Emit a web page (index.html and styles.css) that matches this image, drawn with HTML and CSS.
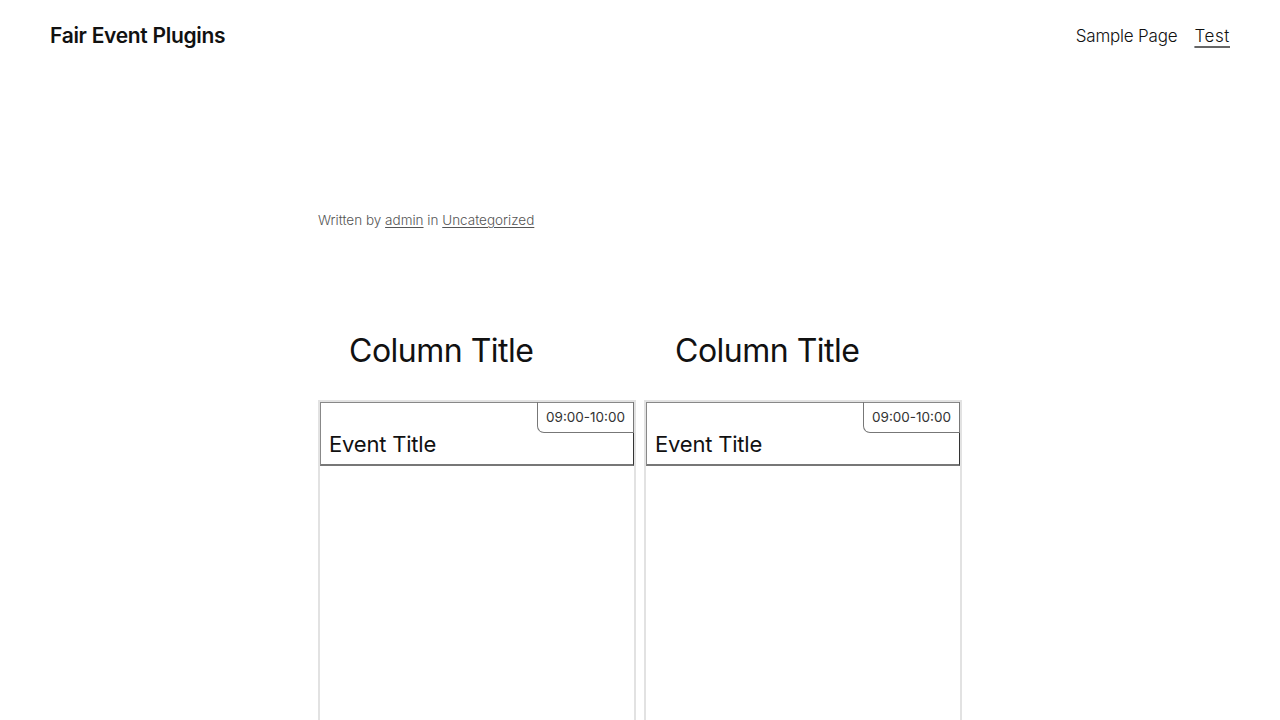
FILE: index.html
```html
<!DOCTYPE html>
<html lang="en">
<head>
<meta charset="utf-8">
<title>Fair Event Plugins</title>
<link rel="stylesheet" href="styles.css">
</head>
<body>
<header class="site-header">
  <div class="site-title">Fair Event Plugins</div>
  <nav class="site-nav">
    <a class="nav-link plain" href="#">Sample Page</a>
    <a class="nav-link wide" href="#">Test</a>
  </nav>
</header>
<main class="content">
  <p class="post-meta">Written by <a href="#">admin</a> in <a href="#">Uncategorized</a></p>
  <div class="schedule">
    <div class="column">
      <h2 class="column-title">Column Title</h2>
      <div class="column-box">
        <div class="event">
          <span class="event-time">09:00-10:00</span>
          <div class="event-title">Event Title</div>
        </div>
      </div>
    </div>
    <div class="column">
      <h2 class="column-title">Column Title</h2>
      <div class="column-box">
        <div class="event">
          <span class="event-time">09:00-10:00</span>
          <div class="event-title">Event Title</div>
        </div>
      </div>
    </div>
  </div>
</main>
</body>
</html>
```
FILE: styles.css
```css
* { box-sizing: border-box; }
html, body { margin: 0; padding: 0; background: #fff; }
body {
  font-family: Inter, "Noto Sans", sans-serif;
  color: #111;
  overflow: hidden;
  height: 720px;
}
.site-header {
  display: flex;
  justify-content: space-between;
  align-items: center;
  height: 70px;
  padding: 0 50px;
}
.site-title {
  font-size: 21px;
  font-weight: 600;
  letter-spacing: -0.3px;
}
.site-nav {
  display: flex;
  gap: 17px;
  padding-top: 2px;
}
.nav-link {
  font-size: 17px;
  font-weight: 300;
  color: #111;
  letter-spacing: -0.2px;
  text-decoration: underline;
  text-decoration-thickness: 1.5px;
  text-underline-offset: 4px;
  text-decoration-color: #666;
}
.nav-link.plain { text-decoration: none; }
.nav-link.wide { letter-spacing: 0.6px; }
.content {
  width: 644px;
  margin: 0 auto;
}
.post-meta {
  margin: 141px 0 0;
  font-size: 13.5px;
  font-weight: 300;
  color: #555;
  line-height: 18px;
}
.post-meta a { color: #555; text-underline-offset: 2px; }
.schedule {
  display: flex;
  gap: 8px;
  margin-top: 99px;
}
.column { width: 318px; }
.column-title {
  margin: 0;
  padding-left: 31px;
  font-size: 32px;
  font-weight: 400;
  line-height: 46px;
  height: 72px;
  letter-spacing: -0.5px;
}
.column-box {
  height: 340px;
  border: 2px solid #e2e2e2;
  border-bottom: none;
}
.event {
  position: relative;
  height: 64px;
  border: 1px solid #888;
  border-right-color: #333;
  border-bottom: 2px solid #777;
  padding: 27px 8px 0;
}
.event-time {
  position: absolute;
  top: -1px;
  right: -1px;
  height: 31px;
  padding: 0 8px;
  border: 1px solid #777;
  border-top: none;
  border-bottom-left-radius: 7px;
  font-size: 13.5px;
  line-height: 30px;
  color: #333;
}
.event-title {
  font-size: 22px;
  line-height: 28px;
  letter-spacing: -0.2px;
}
```
